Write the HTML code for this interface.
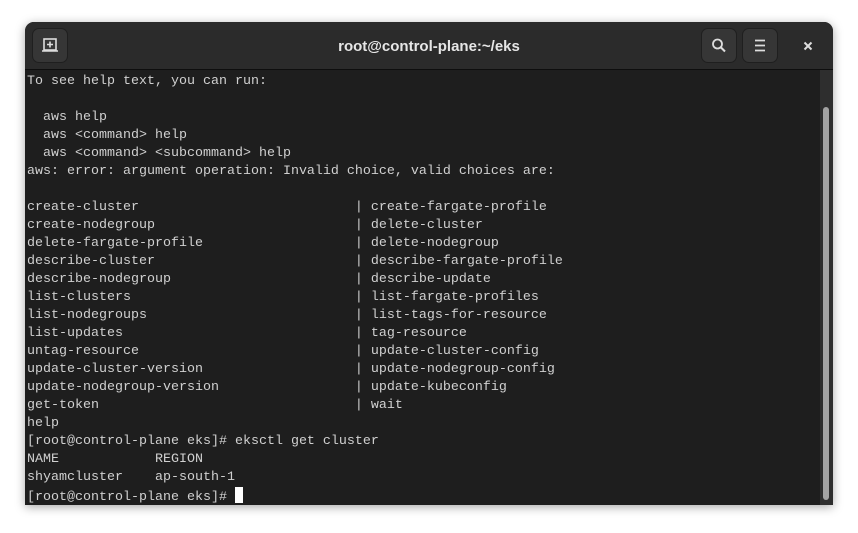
<!DOCTYPE html>
<html><head><style>
html,body{margin:0;padding:0;width:858px;height:533px;background:#fff;overflow:hidden}
.win{position:absolute;left:25px;top:22px;width:808px;height:483px;background:#1e1e1e;border-radius:9px 9px 0 0;overflow:hidden;box-shadow:0 2px 10px rgba(0,0,0,.35)}
.tb{position:absolute;left:0;top:0;width:808px;height:47px;background:#2b2b2b;border-bottom:1px solid #0e0e0e}
.btn{position:absolute;top:7px;width:34px;height:33px;background:#363636;border-radius:6px;box-shadow:0 0 0 1px #1f1f1f}
.title{position:absolute;left:0;right:0;top:16px;text-align:center;color:#e6e6e6;font:bold 15px "Liberation Sans",sans-serif}
.term{position:absolute;left:2px;top:51px;color:#d0d0d0;font:13.33px/18px "Liberation Mono",monospace;white-space:pre}
.sb{position:absolute;left:795px;top:48px;width:13px;height:435px;background:#2e2e2e}
.th{position:absolute;left:798px;top:85px;width:6px;height:393px;background:#a3a3a3;border-radius:3px}
.cur{display:inline-block;width:8px;height:16px;background:#fff;vertical-align:-3px}
</style></head><body>
<div class="win">
<div class="tb">
<div class="btn" style="left:8px"><svg width="34" height="33"><rect x="11" y="10" width="12" height="11" fill="none" stroke="#ddd" stroke-width="1.6"/><line x1="9" y1="22" x2="25" y2="22" stroke="#ddd" stroke-width="1.6"/><path d="M17 12.5v6M14 15.5h6" stroke="#ddd" stroke-width="1.6"/></svg></div>
<div class="title">root@control-plane:~/eks</div>
<div class="btn" style="left:677px"><svg width="34" height="33"><circle cx="15.5" cy="15" r="4.5" fill="none" stroke="#ddd" stroke-width="1.8"/><path d="M19 18.5l4 4" stroke="#ddd" stroke-width="2"/></svg></div>
<div class="btn" style="left:718px"><svg width="34" height="33"><path d="M12 11.5h10M12 16.5h10M12 21.5h10" stroke="#ddd" stroke-width="1.8"/></svg></div>
<svg style="position:absolute;left:775px;top:16px" width="16" height="16"><path d="M4.5 4.5l7 7M11.5 4.5l-7 7" stroke="#ddd" stroke-width="2"/></svg>
</div>
<div class="term">To see help text, you can run:

  aws help
  aws &lt;command&gt; help
  aws &lt;command&gt; &lt;subcommand&gt; help
aws: error: argument operation: Invalid choice, valid choices are:

create-cluster                           | create-fargate-profile
create-nodegroup                         | delete-cluster
delete-fargate-profile                   | delete-nodegroup
describe-cluster                         | describe-fargate-profile
describe-nodegroup                       | describe-update
list-clusters                            | list-fargate-profiles
list-nodegroups                          | list-tags-for-resource
list-updates                             | tag-resource
untag-resource                           | update-cluster-config
update-cluster-version                   | update-nodegroup-config
update-nodegroup-version                 | update-kubeconfig
get-token                                | wait
help
[root@control-plane eks]# eksctl get cluster
NAME            REGION
shyamcluster    ap-south-1
[root@control-plane eks]# <span class="cur"></span></div>
<div class="sb"></div><div class="th"></div>
</div>
</body></html>
